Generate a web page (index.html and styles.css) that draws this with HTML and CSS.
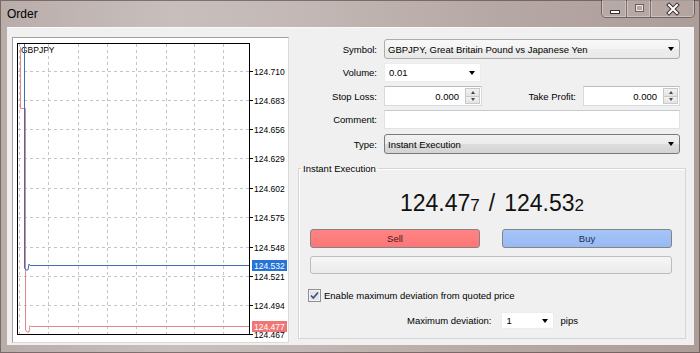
FILE: index.html
```html
<!DOCTYPE html>
<html>
<head>
<meta charset="utf-8">
<link rel="stylesheet" href="styles.css">
</head>
<body>
<div class="window">
  <div class="titlebar">
    <span class="title">Order</span>
    <div class="caption-buttons">
      <span class="cb cb-min"><svg width="25" height="17" viewBox="0 0 25 17"><rect x="8.5" y="10.5" width="9" height="3" fill="#fff" stroke="#3a3030" stroke-width="1"/></svg></span>
      <span class="cb cb-max"><svg width="24" height="17" viewBox="0 0 24 17"><rect x="8.5" y="4.5" width="8" height="7" fill="none" stroke="#6d625f" stroke-width="1"/><rect x="9.5" y="5.5" width="6" height="5" fill="none" stroke="#e8e2e0" stroke-width="1"/></svg></span>
      <span class="cb cb-close"><svg width="43" height="17" viewBox="0 0 43 17"><path d="M18 5 L26 13 M26 5 L18 13" stroke="#3a3030" stroke-width="4" stroke-linecap="square"/><path d="M18 5 L26 13 M26 5 L18 13" stroke="#fff" stroke-width="2" stroke-linecap="square"/></svg></span>
    </div>
  </div>
  <div class="client">
    <div class="chart-panel">
      <svg class="chart" width="275" height="304" viewBox="0 0 275 304">
        <rect x="4.5" y="5.5" width="232" height="291" fill="#fff" stroke="#000"/>
        <g stroke="#c4c4c4" stroke-dasharray="3 3" stroke-width="1">
          <path d="M6.5 6V296 M35.5 6V296 M65.5 6V296 M94.5 6V296 M123.5 6V296 M153.5 6V296 M181.5 6V296 M210.5 6V296"/>
          <path d="M5 33.5H236 M5 62.5H236 M5 91.5H236 M5 120.5H236 M5 150.5H236 M5 179.5H236 M5 209.5H236 M5 238.5H236 M5 267.5H236"/>
        </g>
        <g stroke="#000" stroke-width="1">
          <path d="M236 33.5H240 M236 62.5H240 M236 91.5H240 M236 120.5H240 M236 150.5H240 M236 179.5H240 M236 209.5H240 M236 238.5H240 M236 267.5H240 M236 296.5H240"/>
        </g>
        <g class="axis">
          <text x="241" y="36.5">124.710</text>
          <text x="241" y="65.5">124.683</text>
          <text x="241" y="94.5">124.656</text>
          <text x="241" y="123.5">124.629</text>
          <text x="241" y="153.5">124.602</text>
          <text x="241" y="182.5">124.575</text>
          <text x="241" y="212.5">124.548</text>
          <text x="241" y="241.5">124.521</text>
          <text x="241" y="270.5">124.494</text>
          <text x="241" y="299.5">124.467</text>
        </g>
        <text class="axis" x="8" y="15">GBPJPY</text>
        <path d="M7.5 9V70.5H12.5V292L14 294H16L17 287.5L18 288.5H236" fill="none" stroke="#e38888" stroke-width="1"/>
        <path d="M11.5 6V230L13 232H15L16 226L17 227.5H236" fill="none" stroke="#3e6eaf" stroke-width="1"/>
        <rect x="239" y="222" width="35" height="11" fill="#2574d6"/>
        <text class="axis tag" x="241" y="230.5">124.532</text>
        <rect x="239" y="283" width="35" height="11" fill="#f07676"/>
        <text class="axis tag" x="241" y="291.5">124.477</text>
      </svg>
    </div>
    <div class="form">
      <div class="row r-symbol">
        <span class="lbl">Symbol:</span>
        <div class="combo combo-light w-full"><span>GBPJPY, Great Britain Pound vs Japanese Yen</span><i class="arrow"></i></div>
      </div>
      <div class="row r-volume">
        <span class="lbl">Volume:</span>
        <div class="editcombo w-vol"><span>0.01</span><i class="arrow"></i></div>
      </div>
      <div class="row r-stop">
        <span class="lbl">Stop Loss:</span>
        <div class="spin w-sl">
          <span class="val">0.000</span>
          <span class="spin-btns"><span class="sb"><i class="up"></i></span><span class="sb"><i class="down"></i></span></span>
        </div>
        <span class="lbl lbl-tp">Take Profit:</span>
        <div class="spin w-tp">
          <span class="val">0.000</span>
          <span class="spin-btns"><span class="sb"><i class="up"></i></span><span class="sb"><i class="down"></i></span></span>
        </div>
      </div>
      <div class="row r-comment">
        <span class="lbl">Comment:</span>
        <div class="textbox w-full"></div>
      </div>
      <div class="row r-type">
        <span class="lbl">Type:</span>
        <div class="combo combo-dark w-full"><span>Instant Execution</span><i class="arrow"></i></div>
      </div>
      <fieldset class="group">
        <legend>Instant Execution</legend>
        <div class="quote">124.47<span class="small">7</span><span class="slash">/</span>124.53<span class="small">2</span></div>
        <div class="trade-buttons">
          <div class="btn btn-sell">Sell</div>
          <div class="btn btn-buy">Buy</div>
        </div>
        <div class="progress"></div>
        <div class="check-row">
          <svg class="checkbox" width="13" height="13" viewBox="0 0 13 13">
            <rect x="0.5" y="0.5" width="12" height="12" fill="#f4f4f4" stroke="#8e8f8f"/>
            <rect x="2" y="2" width="9" height="9" fill="#e2e4e8"/>
            <path d="M3 6.5L5.3 9L10 3.5" fill="none" stroke="#3a4d85" stroke-width="1.6"/>
          </svg>
          <span>Enable maximum deviation from quoted price</span>
        </div>
        <div class="dev-row">
          <span class="dev-lbl">Maximum deviation:</span>
          <div class="editcombo w-dev"><span>1</span><i class="arrow"></i></div>
          <span class="pips">pips</span>
        </div>
      </fieldset>
    </div>
  </div>
</div>
</body>
</html>
```

FILE: styles.css
```css
html, body {
  margin: 0;
  padding: 0;
}
body {
  width: 700px;
  height: 353px;
  overflow: hidden;
  font-family: "Liberation Sans", Arial, sans-serif;
  font-size: 9.5px;
  color: #000;
}
.window {
  width: 700px;
  height: 353px;
  display: flex;
  flex-direction: column;
  background: linear-gradient(90deg, #b9adaa 0%, #c8bfbd 25%, #c2b7b4 45%, #b6a8a5 70%, #ad9d99 100%);
  box-shadow: inset 0 0 0 1px rgba(70, 50, 50, 0.55);
}
.titlebar {
  height: 27px;
  flex: none;
  display: flex;
  align-items: flex-start;
}
.title {
  font-size: 12px;
  line-height: 14px;
  margin: 7px 0 0 7px;
  color: #000;
}
.caption-buttons {
  margin-left: auto;
  margin-right: 5px;
  display: flex;
  height: 17px;
  border: 1px solid rgba(60, 40, 40, 0.55);
  border-top: none;
  border-radius: 0 0 5px 5px;
  overflow: hidden;
  background: rgba(255, 255, 255, 0.08);
}
.cb {
  display: block;
  height: 17px;
  box-shadow: inset 0 0 0 1px rgba(255, 255, 255, 0.3);
}
.cb svg {
  display: block;
}
.cb-min, .cb-max {
  border-right: 1px solid rgba(60, 40, 40, 0.45);
}
.cb-min { width: 24px; }
.cb-max { width: 23px; }
.cb-close { width: 43px; }

.client {
  height: 318px;
  margin: 0 6px 0 7px;
  box-sizing: border-box;
  background: #f0f0f0;
  border-top: 1px solid #fafafa;
  padding: 9px 0 0 5px;
  display: flex;
  align-items: flex-start;
}
.chart-panel {
  width: 277px;
  height: 306px;
  flex: none;
  box-sizing: border-box;
  border: 1px solid;
  border-color: #a0a0a0 #dadada #dadada #a0a0a0;
  background: #fff;
}
.chart {
  display: block;
}
.axis {
  font-family: "Liberation Sans", Arial, sans-serif;
  font-size: 8.5px;
  fill: #000;
}
.tag {
  fill: #fff;
}

.form {
  width: 390px;
  margin: 2px 0 0 8px;
  display: flex;
  flex-direction: column;
}
.row {
  display: flex;
  align-items: center;
}
.lbl {
  width: 80px;
  flex: none;
  text-align: right;
  margin-right: 7px;
}
.lbl-tp {
  width: 94px;
  margin-right: 7px;
}
.r-symbol { height: 20px; }
.r-volume { height: 19px; margin-top: 4px; }
.r-stop { height: 20px; margin-top: 4px; }
.r-comment { height: 19px; margin-top: 4px; }
.r-type { height: 20px; margin-top: 5px; }

.w-full { width: 296px; }
.w-vol { width: 97px; }
.w-sl { width: 98px; }
.w-tp { width: 97px; }
.w-dev { width: 53px; }

.combo {
  height: 100%;
  box-sizing: border-box;
  border-radius: 3px;
  display: flex;
  align-items: center;
  padding-left: 3px;
}
.combo-light {
  border: 1px solid #acacac;
  background: linear-gradient(#f8f8f8, #f3f3f3 50%, #ececec 50%, #e9e9e9);
}
.combo-dark {
  border: 1px solid #7a7a7a;
  background: linear-gradient(#f2f2f2, #ebebeb 50%, #dddddd 50%, #d3d3d3);
}
.arrow {
  display: block;
  margin-left: auto;
  margin-right: 5px;
  width: 0;
  height: 0;
  border-left: 3.5px solid transparent;
  border-right: 3.5px solid transparent;
  border-top: 4px solid #000;
}
.editcombo {
  height: 100%;
  box-sizing: border-box;
  background: #fff;
  border: 1px solid #ececec;
  display: flex;
  align-items: center;
  padding-left: 4px;
}
.spin {
  height: 100%;
  box-sizing: border-box;
  background: #fff;
  border: 1px solid #d7dbe0;
  border-top-color: #b9bcc1;
  display: flex;
  align-items: stretch;
}
.spin .val {
  flex: 1;
  text-align: right;
  padding-right: 5px;
  display: flex;
  align-items: center;
  justify-content: flex-end;
}
.spin-btns {
  width: 15px;
  margin: 1px;
  display: flex;
  flex-direction: column;
}
.sb {
  flex: 1;
  box-sizing: border-box;
  border: 1px solid #c9c9c9;
  background: linear-gradient(#f2f2f2, #e3e3e3);
  display: flex;
  align-items: center;
  justify-content: center;
}
.sb + .sb {
  margin-top: -1px;
}
.up, .down {
  display: block;
  width: 0;
  height: 0;
  border-left: 2.5px solid transparent;
  border-right: 2.5px solid transparent;
}
.up { border-bottom: 3px solid #4a4a4a; }
.down { border-top: 3px solid #4a4a4a; }
.textbox {
  height: 100%;
  box-sizing: border-box;
  background: #fff;
  border: 1px solid #dfe3e8;
  border-top-color: #c6c9ce;
}

.group {
  margin: 9px 0 0 1px;
  width: 388px;
  box-sizing: border-box;
  padding: 0 0 9px 0;
  border: 1px solid #d5d5d5;
  box-shadow: inset 1px 1px 0 #fff;
  min-width: 0;
}
.group legend {
  padding: 0 2px;
  margin-left: 2px;
  line-height: 11px;
}
.quote {
  margin-top: 16px;
  height: 26px;
  line-height: 26px;
  font-size: 23px;
  text-align: center;
  color: #111;
}
.quote .small {
  font-size: 17px;
}
.quote .slash {
  margin: 0 9px;
}
.trade-buttons {
  margin: 13px 0 0 11px;
  display: flex;
  gap: 22px;
}
.btn {
  width: 170px;
  height: 19px;
  box-sizing: border-box;
  border: 1px solid #848484;
  border-radius: 3px;
  display: flex;
  align-items: center;
  justify-content: center;
}
.btn-sell {
  background: linear-gradient(#ff8383, #fc7676);
  color: #4a1818;
}
.btn-buy {
  background: linear-gradient(#a6c5f8, #98b9f3);
  color: #1d2f57;
}
.progress {
  margin: 8px 0 0 11px;
  width: 362px;
  height: 18px;
  box-sizing: border-box;
  border: 1px solid #bdbdbd;
  border-radius: 3px;
  background: linear-gradient(#f6f6f6, #ebebeb);
}
.check-row {
  margin: 15px 0 0 9px;
  height: 13px;
  display: flex;
  align-items: center;
  gap: 3px;
}
.checkbox {
  display: block;
}
.dev-row {
  margin: 10px 0 0 108px;
  height: 17px;
  display: flex;
  align-items: center;
}
.dev-lbl {
  margin-right: 10px;
}
.pips {
  margin-left: 6px;
}
```
